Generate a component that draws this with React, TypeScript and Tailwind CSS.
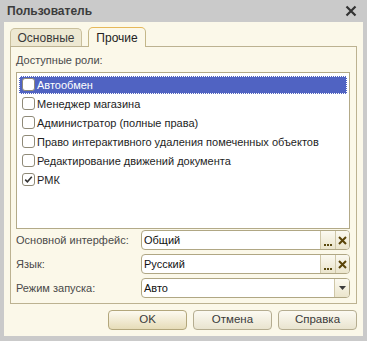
import React from "react";

const font = { fontFamily: '"Liberation Sans", Arial, sans-serif' };

function Check({ checked }: { checked?: boolean }) {
  return (
    <div className="w-[13px] h-[13px] rounded-[3px] border border-[#8f8a78] bg-white flex items-center justify-center shrink-0">
      {checked && (
        <svg width="9" height="9" viewBox="0 0 9 9">
          <path d="M1.2 4.6 L3.4 6.8 L7.8 1.8" fill="none" stroke="#333" strokeWidth="1.6" />
        </svg>
      )}
    </div>
  );
}

function Row({ text, checked, selected }: { text: string; checked?: boolean; selected?: boolean }) {
  return (
    <div className="h-[19px] flex items-center px-[2px]">
      <div
        className={
          "h-[18px] flex-1 flex items-center pl-[3px] gap-[2px] " +
          (selected ? "bg-[#5063c2] outline outline-1 outline-dotted outline-white -outline-offset-1 text-white" : "text-[#1e1e1e]")
        }
      >
        <Check checked={checked} />
        <span className="text-[11px] leading-[14px]">{text}</span>
      </div>
    </div>
  );
}

function Field({ label, value, kind }: { label: string; value: string; kind: "clear" | "select" }) {
  return (
    <div className="flex items-center h-[20px]">
      <div className="w-[125px] text-[11px] text-[#4a4a4a]">{label}</div>
      <div className="flex-1 h-[20px] flex border border-[#b0a784] rounded-[4px] bg-white overflow-hidden">
        <div className="flex-1 flex items-center pl-[2px] text-[11px] text-[#111]">{value}</div>
        {kind === "clear" ? (
          <>
            <div className="w-[15px] border-l border-[#cfc7a8] bg-gradient-to-b from-[#fbf9f0] to-[#ebe5cc] flex items-end justify-center pb-[3px]">
              <div className="flex gap-[1px]">
                <div className="w-[2px] h-[2px] bg-[#5a4a10]" />
                <div className="w-[2px] h-[2px] bg-[#5a4a10]" />
                <div className="w-[2px] h-[2px] bg-[#5a4a10]" />
              </div>
            </div>
            <div className="w-[14px] border-l border-[#cfc7a8] bg-gradient-to-b from-[#fbf9f0] to-[#ebe5cc] flex items-center justify-center">
              <svg width="9" height="9" viewBox="0 0 9 9">
                <path d="M1 1 L8 8 M8 1 L1 8" stroke="#5a4408" strokeWidth="2" />
              </svg>
            </div>
          </>
        ) : (
          <div className="w-[15px] border-l border-[#cfc7a8] bg-gradient-to-b from-[#fbf9f0] to-[#ebe5cc] flex items-center justify-center">
            <svg width="7" height="4" viewBox="0 0 7 4">
              <path d="M0 0 L7 0 L3.5 4 Z" fill="#3a3a3a" />
            </svg>
          </div>
        )}
      </div>
    </div>
  );
}

function Btn({ text, def }: { text: string; def?: boolean }) {
  return (
    <div
      className={
        "w-[79px] h-[20px] rounded-[4px] border flex items-center justify-center text-[11.5px] text-[#3a3a3a] bg-gradient-to-b " +
        (def ? "border-[#b3a77c] from-[#fdfaf0] to-[#e6dcb8]" : "border-[#b5ad90] from-[#fcfaf2] to-[#e9e4cf]")
      }
    >
      {text}
    </div>
  );
}

export default function App() {
  return (
    <div style={font} className="w-[367px] h-[341px] bg-[#cacaca] flex flex-col">
      <div className="h-[22px] flex items-center justify-between pl-[7px] pr-[10px]">
        <span className="text-[12px] font-bold text-[#3c3c3c]">Пользователь</span>
        <svg width="12" height="12" viewBox="0 0 12 12">
          <path d="M1.5 1.5 L10.5 10.5 M10.5 1.5 L1.5 10.5" stroke="#333" strokeWidth="2.2" />
        </svg>
      </div>
      <div className="flex-1 mx-[4px] mb-[5px] bg-[#fbf8e9] flex flex-col px-[6px] pt-[5px] pb-[6px]">
        <div className="flex items-end h-[19px] gap-[6px] relative z-10">
          <div className="w-[72px] h-[18px] rounded-t-[5px] border border-b-0 border-[#c9bf9c] bg-[#ede8d2] flex items-center justify-center text-[12px] text-[#3a3a3a]">
            Основные
          </div>
          <div className="w-[58px] h-[20px] rounded-t-[5px] border border-b-0 border-[#c4b789] border-t-[#e6b85a] bg-[#fbf8e9] flex items-center justify-center text-[12px] text-[#222] -mb-[1px]">
            Прочие
          </div>
        </div>
        <div className="h-[258px] border border-[#bcb291] flex flex-col pl-[5px] pr-[6px]">
          <div className="h-[25px] flex items-center text-[11px] text-[#4a4a4a] pt-[2px]">Доступные роли:</div>
          <div className="h-[157px] border border-[#b3aa88] bg-white pt-[2px]">
            <Row text="Автообмен" selected />
            <Row text="Менеджер магазина" />
            <Row text="Администратор (полные права)" />
            <Row text="Право интерактивного удаления помеченных объектов" />
            <Row text="Редактирование движений документа" />
            <Row text="РМК" checked />
          </div>
          <div className="flex flex-col gap-[4px] mt-[1px]">
            <Field label="Основной интерфейс:" value="Общий" kind="clear" />
            <Field label="Язык:" value="Русский" kind="clear" />
            <Field label="Режим запуска:" value="Авто" kind="select" />
          </div>
        </div>
        <div className="flex-1 flex items-end justify-end gap-[6px]">
          <Btn text="OK" def />
          <Btn text="Отмена" />
          <Btn text="Справка" />
        </div>
      </div>
    </div>
  );
}
